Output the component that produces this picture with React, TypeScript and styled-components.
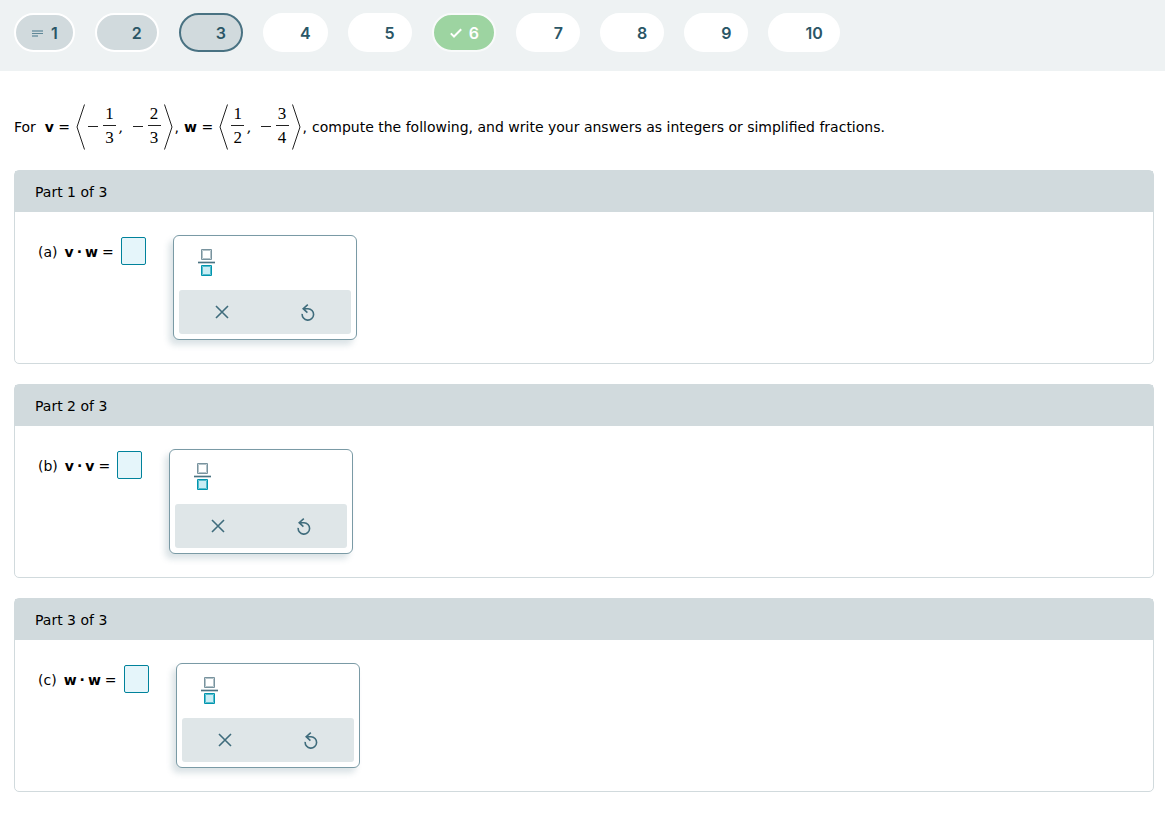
import React from 'react';
import styled, { createGlobalStyle } from 'styled-components';

const GlobalStyle = createGlobalStyle`
  * { box-sizing: border-box; }
  body {
    margin: 0;
    background: #fff;
    color: #000;
    font: 14px/20px 'DejaVu Sans', Verdana, sans-serif;
  }
`;

const NavBar = styled.nav`
  display: flex;
  flex-wrap: wrap;
  gap: 20px;
  padding: 13px 14px 19px;
  background: #eef2f3;
`;

type PillState = 'started' | 'current' | 'done' | 'todo';

const pillFill = { started: '#d1dadd', current: '#d1dadd', done: '#9dd4a1', todo: '#fff' };
const pillEdge = { started: '#fff', current: '#497282', done: '#f8fafa', todo: '#fff' };

const Pill = styled.button<{ $state: PillState }>`
  display: flex;
  align-items: center;
  height: 39px;
  padding: 0 15px;
  border: 2px solid ${(p) => pillEdge[p.$state]};
  border-radius: 20px;
  background: ${(p) => pillFill[p.$state]};
  color: ${(p) => (p.$state === 'done' ? '#fff' : '#2a5666')};
  font: 600 16px/20px Inter, sans-serif;
  cursor: pointer;
`;

const PillIcon = styled.span`
  display: flex;
  width: 20px;
  padding-left: 1px;
`;

const PillNumber = styled.span<{ $wide: boolean }>`
  min-width: ${(p) => (p.$wide ? 10 : 0)}px;
  text-align: right;
`;

const Main = styled.main`
  padding: 32px 11px 32px 14px;
`;

const Problem = styled.div`
  display: flex;
  flex-wrap: wrap;
  align-items: center;
  min-height: 47px;
  margin-bottom: 20px;
`;

const Equation = styled.span`
  display: flex;
  align-items: center;
  margin-right: 5px;
`;

const Vector = styled.span`
  display: flex;
  align-items: center;
  margin: 0 2px 0 6px;
`;

const Bracket = styled.svg`
  width: 9px;
  height: 46px;
  fill: none;
  stroke: #222;
`;

const Term = styled.span`
  display: flex;
  align-items: center;
  font: 17px/20px 'Liberation Serif', serif;
`;

const Minus = styled.span`
  width: 10px;
  height: 1px;
  margin: 0 2px 0 3px;
  background: #222;
`;

const Fraction = styled.span`
  display: flex;
  flex-direction: column;
  align-items: center;
  width: 13px;
  margin: 0 3px;
  line-height: 24px;
`;

const Numerator = styled.span`
  width: 13px;
  border-bottom: 1px solid #222;
  line-height: 22px;
  text-align: center;
`;

const Comma = styled.span`
  margin-right: 6px;
  font-style: italic;
`;

const Card = styled.section`
  margin-bottom: 20px;
  border: 1px solid #d1dadd;
  border-radius: 5px;
`;

const CardTitle = styled.h2`
  margin: 0;
  padding: 11px 20px 10px;
  background: #d1dadd;
  font-size: 14px;
  font-weight: 400;
  line-height: 20px;
`;

const CardBody = styled.div`
  display: flex;
  align-items: flex-start;
  padding: 23px;
`;

const Prompt = styled.label`
  display: flex;
  align-items: center;
  gap: 7px;
  padding-top: 2px;
`;

const Expression = styled.span`
  display: flex;
  gap: 7px;
  padding-top: 2px;
`;

const Product = styled.span`
  display: flex;
  gap: 3px;
`;

const Equals = styled.span`
  padding-left: 1px;
`;

const Answer = styled.input`
  width: 25px;
  height: 28px;
  padding: 0 4px;
  border: 1px solid #00829b;
  border-radius: 2px;
  background: #e5f5fa;
  font: inherit;
`;

const Keypad = styled.div`
  width: 184px;
  margin-left: 27px;
  padding: 5px;
  border: 1px solid #7a9aa5;
  border-radius: 6px;
  background: #fff;
  box-shadow: -4px 5px 6px rgba(73, 114, 130, 0.2);
`;

const IconButton = styled.button`
  display: flex;
  align-items: center;
  justify-content: center;
  padding: 0;
  border: 0;
  background: none;
  cursor: pointer;
`;

const Symbols = styled.div`
  display: flex;
  height: 49px;
  padding: 0 12px 6px;

  ${IconButton} { width: 31px; }
`;

const Actions = styled.div`
  display: flex;
  height: 44px;
  border-radius: 3px;
  background: #dfe6e8;

  ${IconButton} { flex: 1; }
`;

const LinesIcon = () => (
  <svg width="11" height="9" viewBox="0 0 11 9" fill="#8aa7b3">
    <path d="M0 2h11v2H0zM0 7h6v2H0z" />
    <path d="M0 5h11v1H0z" fill="#5f8797" />
  </svg>
);

const CheckIcon = () => (
  <svg width="12" height="10" viewBox="0 0 12 10" fill="none" stroke="#fff" strokeWidth="2">
    <path d="M.8 5.4 4 8.5 11.2 1.3" />
  </svg>
);

const FractionIcon = () => (
  <svg width="17" height="27" viewBox="0 0 17 27" fill="none">
    <path d="M3.5.5h10v10h-10z" stroke="#78939e" />
    <path d="M4.5 1.5h8v8h-8z" stroke="#b5c4ca" />
    <path d="M0 12h17v3H0z" fill="#c3d0d5" />
    <path d="M0 13h17v1H0z" fill="#497282" />
    <path d="M3.5 16.5h10v10h-10z" fill="#c9edf4" stroke="#0095ae" />
    <path d="M4.5 17.5h8v8h-8z" stroke="#55bccd" />
  </svg>
);

const ClearIcon = () => (
  <svg width="14" height="14" viewBox="0 0 14 14" fill="none" stroke="#3f6c7c" strokeWidth="1.6">
    <path d="m1 1 12 12M13 1 1 13" />
  </svg>
);

const UndoIcon = () => (
  <svg width="14" height="17" viewBox="0 0 14 17" fill="none" stroke="#3f6c7c" strokeWidth="1.6">
    <path d="M1.2 9.8A5.7 5.7 0 1 0 7 4.7H2M6.8.6 2.2 4.7l4.2 3.9" />
  </svg>
);

const questions: { n: number; state: PillState }[] = [
  { n: 1, state: 'started' },
  { n: 2, state: 'started' },
  { n: 3, state: 'current' },
  { n: 4, state: 'todo' },
  { n: 5, state: 'todo' },
  { n: 6, state: 'done' },
  { n: 7, state: 'todo' },
  { n: 8, state: 'todo' },
  { n: 9, state: 'todo' },
  { n: 10, state: 'todo' },
];

const Frac = ({ top, bottom, negative }: { top: number; bottom: number; negative?: boolean }) => (
  <Term>
    {negative && <Minus role="img" aria-label="minus" />}
    <Fraction>
      <Numerator>{top}</Numerator>
      <span>{bottom}</span>
    </Fraction>
  </Term>
);

const VectorValue = ({ children }: { children: React.ReactNode }) => (
  <Vector>
    <Bracket viewBox="0 0 9 46"><path d="M8.5.5 1 23l7.5 22.5" /></Bracket>
    {children}
    <Bracket viewBox="0 0 9 46"><path d="M.5.5 8 23 .5 45.5" /></Bracket>
  </Vector>
);

const parts = [
  { letter: 'a', left: 'v', right: 'w' },
  { letter: 'b', left: 'v', right: 'v' },
  { letter: 'c', left: 'w', right: 'w' },
];

export default function App() {
  return (
    <>
      <GlobalStyle />
      <NavBar aria-label="Questions">
        {questions.map(({ n, state }) => (
          <Pill key={n} $state={state} type="button">
            <PillIcon>
              {n === 1 && <LinesIcon />}
              {state === 'done' && <CheckIcon />}
            </PillIcon>
            <PillNumber $wide={n > 1}>{n}</PillNumber>
          </Pill>
        ))}
      </NavBar>
      <Main>
        <Problem>
          <Equation>
            For&nbsp;&nbsp;<b>v</b>&nbsp;=
            <VectorValue>
              <Frac top={1} bottom={3} negative />
              <Comma>,</Comma>
              <Frac top={2} bottom={3} negative />
            </VectorValue>
            ,
          </Equation>
          <Equation>
            <b>w</b>&nbsp;=
            <VectorValue>
              <Frac top={1} bottom={2} />
              <Comma>,</Comma>
              <Frac top={3} bottom={4} negative />
            </VectorValue>
            ,
          </Equation>
          <span>compute the following, and write your answers as integers or simplified fractions.</span>
        </Problem>
        {parts.map(({ letter, left, right }, i) => (
          <Card key={letter}>
            <CardTitle>Part {i + 1} of 3</CardTitle>
            <CardBody>
              <Prompt>
                <Expression>
                  <span>({letter})</span>
                  <Product>
                    <b>{left}</b>
                    <b>·</b>
                    <b>{right}</b>
                    <Equals>=</Equals>
                  </Product>
                </Expression>
                <Answer type="text" />
              </Prompt>
              <Keypad>
                <Symbols>
                  <IconButton type="button" aria-label="Fraction"><FractionIcon /></IconButton>
                </Symbols>
                <Actions>
                  <IconButton type="button" aria-label="Clear"><ClearIcon /></IconButton>
                  <IconButton type="button" aria-label="Undo"><UndoIcon /></IconButton>
                </Actions>
              </Keypad>
            </CardBody>
          </Card>
        ))}
      </Main>
    </>
  );
}
